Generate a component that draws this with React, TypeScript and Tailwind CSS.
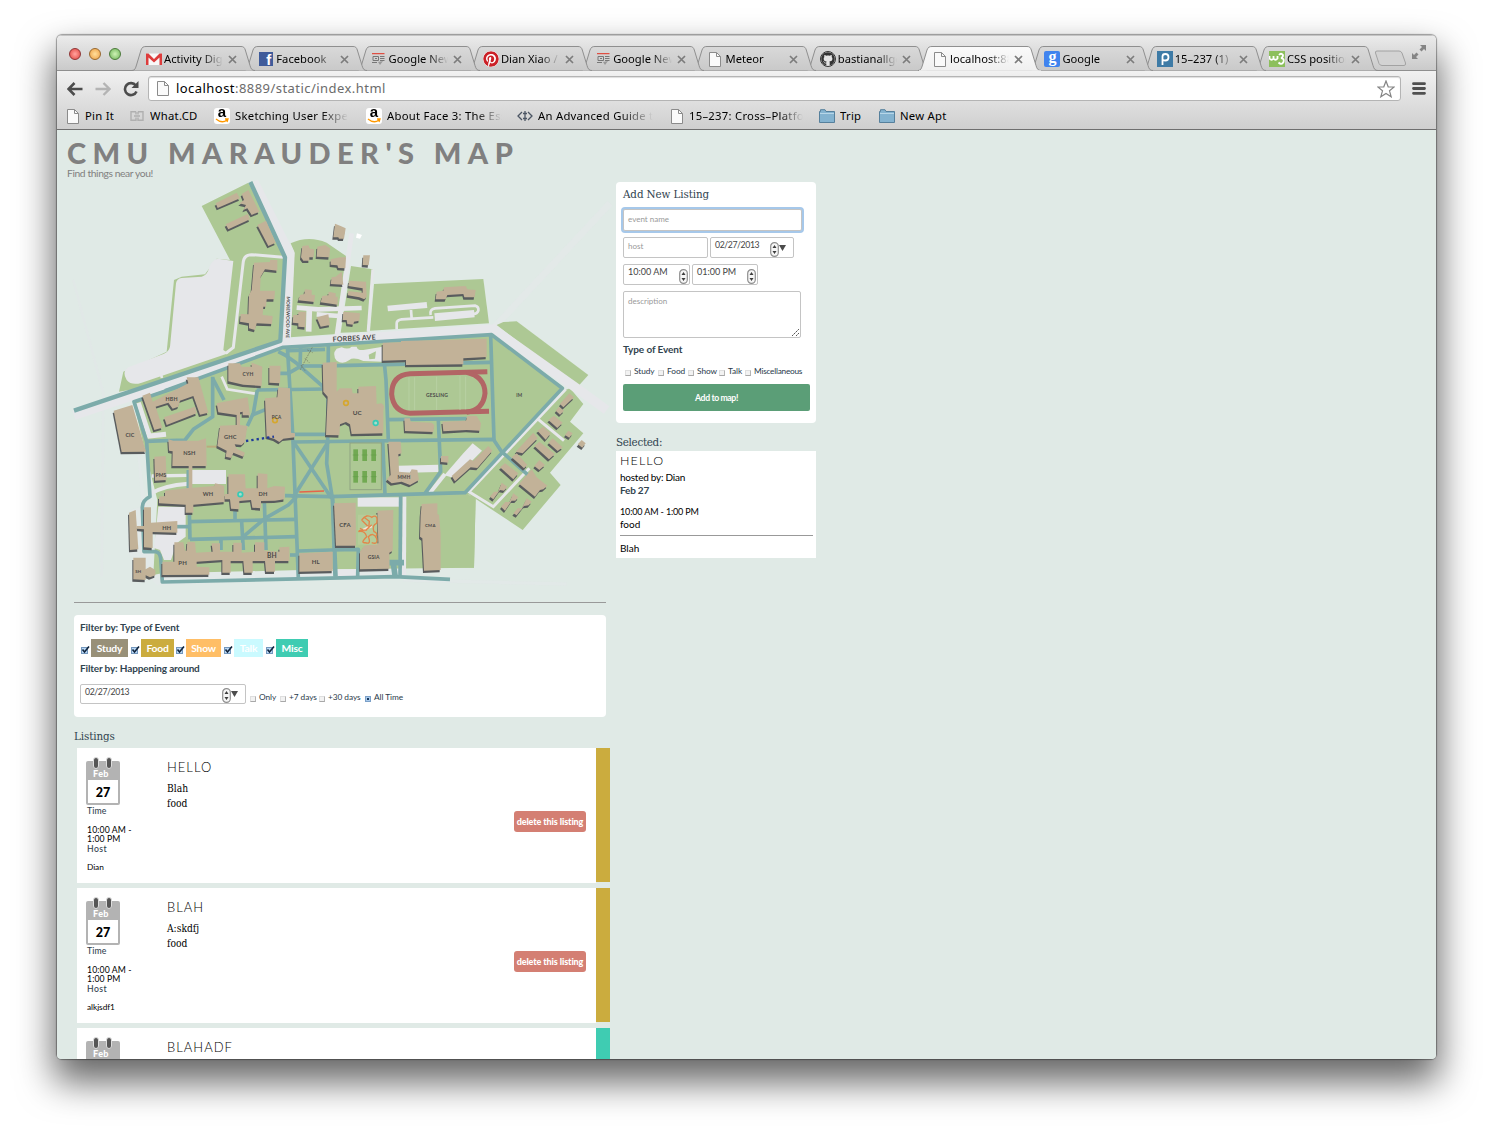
import React from "react";
import { FaGithub, FaPinterest } from "react-icons/fa";

const ui = "font-['Noto_Sans','Open_Sans',sans-serif]";
const slab = "font-['DejaVu_Serif_Condensed','DejaVu_Serif',serif]";

/* ---------- browser chrome ---------- */

function PageIcon() {
  return (
    <svg width="12" height="15" viewBox="0 0 12 15" className="shrink-0">
      <path d="M.5 .5H7.5L11.5 4.5V14.5H.5Z" fill="#fafafa" stroke="#8b8b8b" />
      <path d="M7.5 .5V4.5H11.5" fill="none" stroke="#8b8b8b" />
    </svg>
  );
}

function Favicon({ kind }: { kind: string }) {
  switch (kind) {
    case "gmail":
      return (
        <svg width="16" height="16" viewBox="0 0 16 16">
          <rect y="2.500" width="16" height="11.500" fill="#f8f8f8" />
          <path d="M0 2.500H2.500L8 8L13.500 2.500H16V14H13.500V6.500L8 11.500L2.500 6.500V14H0Z" fill="#dd3c3c" />
        </svg>
      );
    case "facebook":
      return (
        <span className="relative block h-[14px] w-[14px] overflow-hidden bg-[#3f5b9a] font-['Liberation_Sans',sans-serif] text-[15px] font-bold leading-[16px] text-white">
          <span className="absolute right-[2px] top-0">f</span>
        </span>
      );
    case "news":
      return (
        <svg width="13" height="12" viewBox="0 0 13 12">
          <path d="M0 .7H12.500" stroke="#df4f43" strokeWidth="1.300" />
          <path d="M1 3.500H6.500V7.500H1ZM3 5.500H5M0 9.500H5M8 3.500H12.500M8 5.500H12.500M8 7.500H12.500" fill="none" stroke="#777" />
          <path d="M6 9L11 8L8 12Z" fill="#999" />
        </svg>
      );
    case "pinterest":
      return <FaPinterest size={16} color="#cb2027" className="rounded-full bg-white" />;
    case "github":
      return (
        <span className="flex h-4 w-4 items-center justify-center rounded-full border border-[#333] bg-[#e4e4e4]">
          <FaGithub size={14} color="#333" />
        </span>
      );
    case "google":
      return (
        <span className="block h-4 w-4 rounded-[2px] bg-[#4083ee] text-center font-['Liberation_Serif',serif] text-[16px] font-bold leading-[12px] text-white">g</span>
      );
    case "piazza":
      return (
        <svg width="16" height="16" viewBox="0 0 16 16">
          <rect width="16" height="16" fill="#3e7ba6" />
          <path d="M5.500 14V5.500Q5.500 3 8.300 3Q11.500 3 11.500 6.200Q11.500 9.500 8.300 9.500Q7 9.500 6 9" fill="none" stroke="#fff" strokeWidth="1.800" />
        </svg>
      );
    case "w3":
      return (
        <svg width="16" height="16" viewBox="0 0 16 16">
          <rect width="16" height="16" fill="#8cbf5c" />
          <path d="M.5 5V7.500Q2.500 10 4.500 7.500V5V7.500Q6.500 10 8.500 7.500V5M10 4Q12 1.500 14 4Q14 6.500 12 7Q15.500 7.500 14.500 11Q12.500 14.500 9.500 11.500" fill="none" stroke="#fff" strokeWidth="1.800" />
        </svg>
      );
    default:
      return <PageIcon />;
  }
}

const tabs = [
  { kind: "gmail", label: "Activity Digest" },
  { kind: "facebook", label: "Facebook" },
  { kind: "news", label: "Google News" },
  { kind: "pinterest", label: "Dian Xiao / Pins" },
  { kind: "news", label: "Google News" },
  { kind: "page", label: "Meteor" },
  { kind: "github", label: "bastianallgeier" },
  { kind: "page", label: "localhost:8889", active: true },
  { kind: "google", label: "Google" },
  { kind: "piazza", label: "15–237 (1)" },
  { kind: "w3", label: "CSS positioning" },
];

function Tab({ kind, label, active, order }: { kind: string; label: string; active?: boolean; order: number }) {
  return (
    <div className="relative h-[25px] w-[112.3px] shrink-0" style={{ zIndex: active ? 40 : 20 - order }}>
      <svg className="absolute left-0 top-0 overflow-visible" width="124" height="25" viewBox="0 0 124 25">
        <path
          d="M0 24.500C3 24.500 3.500 22 4.500 19L9 4C10 1.200 11.500 .5 14 .5H109C111.500 .5 112.500 1.500 113.300 4L118 19.500C119 23 120 24.500 123 24.500"
          fill={active ? "url(#activeTab)" : "url(#idleTab)"}
          stroke="#8f8f8f"
        />
        {active && <path d="M1 25H123" stroke="#f0f0f0" strokeWidth="1.500" />}
      </svg>
      <div className="relative flex h-[25px] items-center pl-[14px] pt-px">
        <span className="flex w-[16px] shrink-0 justify-center"><Favicon kind={kind} /></span>
        <span className={`${ui} ml-[2px] w-[59px] shrink-0 overflow-hidden whitespace-nowrap text-[11.2px] text-black [mask-image:linear-gradient(to_right,black_66%,transparent_100%)]`}>
          {label}
        </span>
        <svg className="ml-[5px]" width="9" height="9" viewBox="0 0 9 9">
          <path d="M1 1L8 8M8 1L1 8" stroke="#7c7c7c" strokeWidth="1.700" />
        </svg>
      </div>
    </div>
  );
}

function Light({ tone }: { tone: string }) {
  return <span className={`block h-[12px] w-[12px] rounded-full border ${tone}`} />;
}

function Amazon() {
  return (
    <span className="flex h-4 w-4 shrink-0 flex-col items-center overflow-hidden rounded-[3px] bg-white">
      <span className="font-['Liberation_Sans',sans-serif] text-[15px] font-bold leading-[8px] text-black">a</span>
      <svg className="mt-[2px] shrink-0" width="14" height="5" viewBox="0 0 14 5"><path d="M1 1Q7 6 12 2M10 1L13 1L12 4" fill="none" stroke="#f90" strokeWidth="1.300" /></svg>
    </span>
  );
}

function Folder() {
  return (
    <svg width="16" height="14" viewBox="0 0 16 14" className="shrink-0">
      <path d="M.5 2.500V13.500H15.500V2.500H7L6 .7H1.500V2.500Z" fill="#84b3d0" stroke="#56809c" />
      <path d="M1 4.500H15" stroke="#b7d6e8" />
    </svg>
  );
}

function Bookmark({ icon, label, box }: { icon: React.ReactNode; label: string; box: string }) {
  return (
    <div className={`flex h-[26px] shrink-0 items-center ${box}`}>
      {icon}
      <span className={`${ui} overflow-hidden whitespace-nowrap text-[11.3px] tracking-[0.26px] text-black`}>{label}</span>
    </div>
  );
}

function Chrome() {
  return (
    <header className="h-[95px] shrink-0 overflow-hidden rounded-t-[5px]">
      <svg width="0" height="0" className="absolute">
        <defs>
          <linearGradient id="idleTab" x1="0" y1="0" x2="0" y2="1"><stop offset="0" stopColor="#d9d9d9" /><stop offset="1" stopColor="#c9c9c9" /></linearGradient>
          <linearGradient id="activeTab" x1="0" y1="0" x2="0" y2="1"><stop offset="0" stopColor="#fafafa" /><stop offset="1" stopColor="#f0f0f0" /></linearGradient>
        </defs>
      </svg>
      <div className="flex h-[36px] items-end border-b border-t border-b-[#8f8f8f] border-t-[#c4c4c4] bg-linear-to-b from-[#ebebeb] to-[#cacaca]">
        <div className="flex h-[34px] w-[75px] items-center gap-2 pl-[12px] pt-px">
          <Light tone="border-[#8f3535] bg-radial from-[#ff9a95] from-10% to-[#dd3c3d]" />
          <Light tone="border-[#98682e] bg-radial from-[#ffd992] from-10% to-[#eb9d3c]" />
          <Light tone="border-[#4b7a3a] bg-radial from-[#c5ecac] from-10% to-[#6bb356]" />
        </div>
        <div className="-mb-px flex">
          {tabs.map((t, i) => <Tab key={i} {...t} order={i} />)}
        </div>
        <svg className="mb-[3px] ml-[6px]" width="34" height="17" viewBox="0 0 34 17">
          <path d="M4 1H26Q28 1 29 3L32.500 13Q33 15.500 31 15.500H9Q7 15.500 6 13.500L2.500 3Q2 1 4 1Z" fill="#d3d3d3" stroke="#a2a2a2" />
        </svg>
        <svg className="mb-[10px] ml-auto mr-[9px]" width="16" height="16" viewBox="0 0 16 16">
          <path d="M9 1H15V7L13 5L10.500 7.500L8.500 5.500L11 3ZM7 15H1V9L3 11L5.500 8.500L7.500 10.500L5 13Z" fill="#858585" />
        </svg>
      </div>
      <div className="h-[59px] border-b border-[#6f6f6f] bg-linear-to-b from-[#f1f1f1] to-[#cfcfcf]">
        <div className="flex h-[33px] items-center pl-[10px] pt-[2px]">
          <svg width="16" height="14" viewBox="0 0 16 14"><path d="M15.500 7H2M7.500 1L1.500 7L7.500 13" fill="none" stroke="#4c4c4c" strokeWidth="2.600" /></svg>
          <svg className="ml-[12px]" width="16" height="14" viewBox="0 0 16 14"><path d="M.5 7H14M8.500 1L14.500 7L8.500 13" fill="none" stroke="#b4b4b4" strokeWidth="2.300" /></svg>
          <svg className="ml-[12px]" width="16" height="16" viewBox="0 0 16 16">
            <path d="M12.800 4.500A6 6 0 1 0 13.500 10.500" fill="none" stroke="#4c4c4c" strokeWidth="2.600" />
            <path d="M15.500 0V7H8.500Z" fill="#4c4c4c" />
          </svg>
          <div className="ml-[9px] flex h-[25px] w-[1253px] items-center rounded-[3px] border border-[#b4b4b4] bg-white pl-[8px] pr-[5px] shadow-[inset_0_1px_1px_#ddd]">
            <PageIcon />
            <span className="ml-[7px] font-['Noto_Sans','Open_Sans',sans-serif] text-[13px] tracking-[0.45px] text-[#6b6b6b]"><span className="text-black">localhost</span>:8889/static/index.html</span>
            <svg className="ml-auto" width="18" height="18" viewBox="0 0 18 18"><path d="M9 1L11.200 6.800L17.200 7L12.500 10.800L14.200 16.800L9 13.400L3.800 16.800L5.500 10.800L.8 7L6.800 6.800Z" fill="#fff" stroke="#858585" strokeWidth="1.200" /></svg>
          </div>
          <svg className="ml-[11px]" width="14" height="13" viewBox="0 0 14 13"><path d="M1.500 1.700H12.500M1.500 6.500H12.500M1.500 11.300H12.500" stroke="#505050" strokeWidth="2.800" strokeLinecap="round" /></svg>
        </div>
        <div className="flex h-[24px] items-center pl-[10px]">
          <Bookmark icon={<PageIcon />} label="Pin It" box="w-[63px] gap-[6px]" />
          <Bookmark
            icon={<svg width="14" height="10" viewBox="0 0 14 10" className="shrink-0"><path d="M6 .8H1V9.200H6V6.500M6 3.500V.8M8 .8H13V9.200H8V6.500M8 3.500V.8M4 5H10" fill="none" stroke="#b0b0b0" strokeWidth="1.400" /></svg>}
            label="What.CD" box="w-[84px] gap-[6px]" />
          <Bookmark icon={<Amazon />} label="Sketching User Experiences" box="w-[134px] gap-[5px] [mask-image:linear-gradient(to_right,black_80%,transparent_100%)]" />
          <Bookmark icon={<Amazon />} label="About Face 3: The Essentials" box="ml-[18px] w-[136px] gap-[5px] [mask-image:linear-gradient(to_right,black_80%,transparent_100%)]" />
          <Bookmark
            icon={<svg width="16" height="10" viewBox="0 0 16 10" className="shrink-0"><path d="M5 1L1 5L5 9M11 1L15 5L11 9M8 0V10M6 2.500H10M6 7.500H10" fill="none" stroke="#4b5563" strokeWidth="1.300" /></svg>}
            label="An Advanced Guide to HTML" box="ml-[15px] w-[136px] gap-[5px] [mask-image:linear-gradient(to_right,black_76%,transparent_100%)]" />
          <Bookmark icon={<PageIcon />} label="15–237: Cross–Platform" box="ml-[18px] w-[132px] gap-[6px] [mask-image:linear-gradient(to_right,black_82%,transparent_100%)]" />
          <Bookmark icon={<Folder />} label="Trip" box="ml-[16px] w-[60px] gap-[5px]" />
          <Bookmark icon={<Folder />} label="New Apt" box="gap-[5px]" />
        </div>
      </div>
    </header>
  );
}

/* ---------- campus map ---------- */

const lawns = [
  "395,78 535,8 650,232 637,482 190,628 147,635 160,575 290,515 312,300 335,290 405,283 440,236 480,240",
  "843,258 908,268 892,455 812,458",
  "912,312 1240,297 1257,430 900,452",
  "1280,435 1300,426 1340,424 1555,585 1522,622",
  "190,662 640,500 1265,462 1480,622 1195,945 1217,955 1212,1163 780,1168 275,1180 250,1185 262,960 222,800",
  "1010,955 1217,945 1212,1163 1008,1160",
  "1480,632 1500,625 1540,672 1500,725 1540,760 1440,878 1472,915 1358,1050 1195,942",
];

const buildings = [
  "437,70 500,38 510,55 443,84",
  "515,42 535,30 568,95 545,105 532,85 520,90 528,75 508,70 522,60",
  "467,133 533,102 540,118 475,148",
  "562,135 588,122 617,188 595,198",
  "552,248 600,246 600,240 622,240 622,272 585,268 572,290 570,332 615,332 613,358 590,358 588,380 580,380 578,405 608,408 606,432 560,430 555,450 537,445 537,430 510,425 512,402 535,403 537,345 545,330",
  "697,198 715,196 720,206 733,208 731,232 718,232 718,242 700,242 693,232",
  "742,200 765,195 780,205 778,232 740,230",
  "782,238 810,232 828,232 826,265 805,264 802,256 782,254",
  "797,290 815,275 820,314 782,312 785,292",
  "690,345 703,342 705,328 725,330 725,344 735,345 733,366 685,361",
  "757,348 775,346 776,335 797,340 797,350 803,350 803,374 752,367",
  "685,395 708,395 706,442 685,440 685,430 668,428 670,405 685,405",
  "740,412 775,403 780,435 752,440",
  "795,131 812,138 827,145 822,176 807,176 805,172 790,172",
  "880,226 900,226 896,256 878,255",
  "837,302 888,305 890,350 883,358 868,352 833,346 835,333 878,338 878,325 835,318",
  "820,395 870,400 868,422 852,425 850,434 832,432 830,420 818,420",
  "1122,322 1187,318 1192,328 1217,330 1214,352 1183,352 1180,342 1132,345 1127,358 1097,358 1100,335 1120,332",
  "938,488 993,487 993,483 1250,476 1250,531 1180,535 1180,553 1008,555 1008,540 938,542",
  "758,548 800,546 800,635 810,625 845,625 848,640 865,640 865,620 918,618 920,672 935,670 942,678 940,692 940,760 845,762 840,733 828,726 810,733 808,766 768,765 773,650 760,635",
  "131,692 187,675 228,815 155,816",
  "217,647 240,638 248,665 355,610 350,592 385,592 415,698 390,704 370,648 330,662 325,680 308,686 295,668 257,680 277,743 253,750",
  "282,712 375,680 380,700 290,735",
  "295,778 310,782 385,782 408,775 410,858 307,858 308,814 297,812",
  "253,830 287,828 290,900 255,902",
  "440,670 533,652 540,706 518,706 518,695 510,697 510,735 532,738 525,785 515,795 494,793 500,806 525,818 520,830 490,818 484,834 467,830 470,812 442,798 450,737 500,735 500,705 445,697",
  "475,550 510,550 515,560 545,560 545,548 577,560 575,618 520,614 475,604",
  "598,557 632,557 630,610 598,608",
  "585,655 622,652 625,622 660,625 663,758 675,760 675,772 640,776 628,786 612,776 590,770",
  "267,950 285,948 285,932 350,925 433,918 435,910 445,912 462,918 464,966 370,974 370,998 347,998 347,974 267,970",
  "475,883 525,883 527,925 563,925 563,880 592,882 592,925 613,918 645,920 643,958 615,962 573,963 573,985 547,983 543,960 508,963 508,988 483,986 480,958 464,958 464,942 475,942",
  "222,982 243,982 243,1028 322,1023 322,1058 248,1056 248,1104 222,1102 222,1048 200,1046 200,1038 222,1038",
  "177,998 197,990 205,1108 180,1110",
  "190,1133 227,1133 227,1168 240,1160 256,1170 256,1186 240,1192 227,1186 227,1200 190,1198",
  "277,1145 313,1145 313,1087 340,1087 345,1112 350,1112 352,1085 375,1087 378,1118 428,1115 425,1090 450,1090 450,1115 490,1115 490,1088 515,1088 515,1118 555,1115 555,1087 583,1087 583,1112 628,1115 628,1102 658,1100 658,1143 615,1143 615,1175 588,1175 585,1143 548,1143 548,1178 523,1178 520,1143 482,1143 482,1178 457,1178 457,1140 380,1145 380,1160 418,1162 418,1184 277,1185",
  "688,1120 788,1115 788,1173 688,1175",
  "1003,715 1020,715 1022,725 1085,728 1093,735 1090,756 1005,753",
  "1117,725 1188,722 1192,708 1220,708 1233,730 1230,752 1190,750 1120,754",
  "955,785 992,785 995,820 985,823 987,875 1020,878 1025,868 1042,870 1047,900 1020,915 995,905 965,910 950,898 962,885",
  "1113,828 1135,828 1135,848 1113,846",
  "1145,888 1200,838 1210,843 1255,798 1267,812 1222,864 1202,862 1155,904",
  "792,970 857,968 858,1097 798,1097",
  "870,1115 883,1097 925,1090 922,992 970,990 968,1112 958,1118 958,1166 870,1168",
  "1055,972 1102,970 1102,1002 1107,1005 1112,1060 1112,1170 1062,1172 1057,1075 1050,1070 1052,1005",
  "1470,672 1498,640 1512,652 1480,682",
  "1457,692 1467,680 1482,692 1470,704",
  "1435,720 1452,707 1478,728 1462,744",
  "1485,765 1495,752 1508,760 1498,773",
  "1523,793 1535,780 1547,790 1537,803",
  "1402,752 1420,740 1442,760 1427,779",
  "1435,788 1448,775 1478,802 1463,813",
  "1393,798 1408,785 1455,822 1437,838",
  "1337,815 1390,758 1403,775 1358,820",
  "1325,832 1340,820 1372,855 1362,865",
  "1393,858 1408,840 1425,855 1408,870",
  "1290,862 1305,850 1345,880 1330,898",
  "1348,912 1385,868 1400,892 1432,917 1420,928 1410,930 1395,950",
  "1260,950 1272,935 1284,935 1295,908 1312,920 1302,932 1290,930 1270,958",
  "1293,980 1306,966 1318,966 1330,940 1345,952 1336,962 1325,962 1305,992",
  "1330,1000 1343,985 1356,984 1370,955 1385,965 1376,976 1362,978 1340,1006",
];

const paths = [
  "M285,632L640,502L810,492L1265,464L1477,625L1185,938L780,950L645,947",
  "M652,500L668,760L685,1195",
  "M775,497L773,785L770,850L788,960L798,1190",
  "M560,630L770,627",
  "M668,763H770",
  "M668,786L1270,778L1295,815L1382,892",
  "M670,785L785,955",
  "M775,785L668,955",
  "M355,610L192,665L230,785L240,950Q215,962 217,985L222,1115H258Q270,1118 272,1135L277,1206L975,1190L1140,1198",
  "M228,784L345,780L370,748L428,710V590",
  "M428,595L462,660",
  "M562,630L550,700L532,738",
  "M545,706L588,688",
  "M800,557L1262,547",
  "M943,550L948,600L955,780",
  "M1262,465L1272,780",
  "M955,719L1190,716",
  "M1105,720L1112,875L1065,940",
  "M938,780L945,945",
  "M992,945L990,1190",
  "M780,1110L865,1108L863,1190",
  "M787,950L795,1190",
  "M355,870V925",
  "M358,990L360,1078",
  "M355,1025L680,1018",
  "M360,1078L680,1070",
  "M515,1025L520,1110",
  "M583,965L588,1110",
  "M520,1070L585,1015L655,975L680,950",
  "M495,985V1020",
  "M320,1040H355",
  "M453,1080V1110",
  "M660,1125H685",
  "M685,1113L780,1110",
  "M625,515L645,525L680,550L765,625",
  "M692,500L690,560L655,580H630",
  "M655,512L765,508",
  "M690,558H760",
];

const whiteRoads: [string, number][] = [
  ["M640,232L545,224Q524,224 520,244L490,502L467,520", 9],
  ["M272,580L276,594", 8],
  ["M845,160L800,470", 14],
  ["M680,383L745,388L875,384", 14],
  ["M718,385L716,455", 17],
  ["M740,403L808,408", 14],
  ["M908,268L894,455", 8],
  ["M1023,390L1025,415", 8],
  ["M980,448V430Q980,420 995,418L1090,412", 8],
  ["M1082,405Q1078,388 1095,385L1215,377Q1227,380 1225,392Q1222,402 1210,402", 8],
  ["M205,668L238,768L288,763", 15],
  ["M245,888L350,886", 10],
  ["M240,942Q280,916 355,911", 12],
  ["M985,868L1105,865", 22],
  ["M1003,950L1002,1190", 12],
  ["M1080,938L1125,882", 12],
  ["M455,590L472,628L555,641", 8],
  ["M1487,628L1197,935L1270,980L1378,865", 9],
  ["M1402,716L1482,782", 9],
];

const labels: [string, number, number, number][] = [
  ["CYH", 534, 588, 15], ["HBH", 305, 662, 16], ["CIC", 180, 771, 16], ["NSH", 358, 824, 17], ["PMS", 273, 890, 15],
  ["GHC", 481, 777, 17], ["PCA", 620, 716, 14], ["UC", 862, 705, 19], ["WH", 414, 947, 17], ["DH", 579, 949, 17],
  ["HH", 290, 1049, 17], ["SH", 205, 1178, 13], ["PH", 338, 1156, 18], ["BH", 606, 1134, 20], ["HL", 737, 1151, 18],
  ["CFA", 825, 1040, 18], ["GSIA", 911, 1136, 15], ["CMA", 1081, 1042, 13], ["MMH", 1002, 898, 14], ["GESLING", 1101, 652, 15],
  ["IM", 1348, 650, 14],
];

function CampusMap() {
  return (
    <svg width="532" height="410" viewBox="12 6 1596 1230" className="block overflow-visible">
      <g fill="none" stroke="#e4e7e9" strokeLinecap="butt">
        <path d="M10,300L100,640L95,1190" strokeWidth="8" opacity=".4" />
        <path d="M1275,440L1620,70" strokeWidth="20" opacity=".6" />
        <path d="M1000,1200L1490,1212" strokeWidth="10" opacity=".5" />
      </g>
      <g fill="#e6e7ea">
        <path d="M190,675L215,980L180,990L175,1120L260,1215L1010,1190L1000,1150H250Z" opacity=".35" />
      </g>
      <g fill="#adc894">
        {lawns.map((p, i) => <polygon key={i} points={p} />)}
        <path d="M662,190Q715,165 770,188L828,228L800,462L660,472L673,215Z" />
      </g>
      <path d="M490,243L460,510L475,520L215,608Q185,618 170,600Q155,575 175,562L280,522Q297,514 300,500L318,310Q320,296 335,294L395,290Q412,286 418,262Q428,236 445,236Z" fill="#e6e7ea" />
      <g fill="none" stroke="#e6e7ea">
        <path d="M552,4L661,222L649,488" strokeWidth="26" />
        <path d="M12,706L180,650L645,490L1270,447L1530,632L1610,690" strokeWidth="28" />
        {whiteRoads.map(([d, w], i) => <path key={i} d={d} strokeWidth={w} />)}
      </g>
      <g fill="#e6e7ea">
        <polygon points="952,377 1070,366 1072,384 954,394" />
        <polygon points="1093,400 1212,390 1214,412 1095,423" />
        <rect x="365" y="870" width="103" height="42" />
        <polygon points="265,980 347,980 347,1070 320,1090 303,1140 282,1140 270,1110 252,1104" />
        <polygon points="1208,790 1236,812 1155,895 1123,886 1180,820" />
        <rect x="863" y="952" width="125" height="28" />
        <rect x="802" y="1168" width="56" height="20" />
        <path d="M815,502Q835,510 845,500H860Q862,512 880,510L938,500V545L880,543Q850,530 838,540Q818,555 800,542Q785,522 800,506Z" />
      </g>
      <path d="M896,524L918,514L915,536L898,538Z" fill="#adc894" />
      <g fill="none" stroke="#7cabaa" strokeWidth="11" strokeLinejoin="round">
        {paths.map((d, i) => <path key={i} d={d} />)}
        <path d="M541,6L645,232L631,483L12,692" strokeWidth="13" />
        <path d="M958,1148H1002M970,1150L976,1193" strokeWidth="17" />
      </g>
      <g fill="none">
        <path d="M1252,575L1020,581Q965,585 965,643Q970,695 1020,700L1257,694" stroke="#b26565" strokeWidth="15" />
        <path d="M1190,577Q1245,590 1245,640Q1240,690 1190,697" stroke="#b26565" strokeWidth="15" />
        <path d="M1017,592V690M1034,592V690M1100,590V690M1170,588V690M1187,590V688" stroke="#bcd5aa" strokeWidth="2" />
        <rect x="840" y="789" width="94" height="140" stroke="#8fa482" strokeWidth="3" />
      </g>
      <g fill="#71a952">
        {[850, 877, 904].map((x) => [808, 873].map((y) => (
          <g key={x + y}>
            <rect x={x} y={y} width="14" height="35" />
            <path d={`M${x - 2},${y + 17}h18`} stroke="#5d9a45" strokeWidth="1.500" />
          </g>
        )))}
      </g>
      <path d="M410,800H442" stroke="#b9ab7e" strokeWidth="6" />
      <g fill="#595c5e" transform="translate(-3 7)">
        {buildings.map((p, i) => <polygon key={i} points={p} />)}
      </g>
      <g fill="#c2b298">
        {buildings.map((p, i) => <polygon key={i} points={p} />)}
        <rect x="356" y="858" width="11" height="70" />
      </g>
      <rect x="864" y="1004" width="58" height="90" fill="#b5cc9a" />
      <g fill="none" stroke="#e2864a" strokeWidth="4">
        <path d="M875,1020Q890,1000 905,1012Q925,1000 920,1030Q905,1035 912,1055Q925,1060 918,1070M870,1045Q890,1060 895,1040Q880,1025 875,1020M865,1055Q885,1050 890,1070Q870,1090 885,1088Q905,1095 895,1070Q910,1055 920,1075Q925,1095 905,1088" />
        <path d="M880,1050L905,1038" stroke="#f5e3d6" strokeWidth="8" />
        <path d="M866,1052L888,1050L905,1034M882,1012L898,1024L896,1046" />
        <path d="M688,936L762,933" stroke="#e5644a" strokeWidth="5" />
      </g>
      <path d="M690,570L728,500M693,555L705,572M705,535L718,548M712,510L728,518" stroke="#6b6e5c" strokeWidth="2" fill="none" strokeDasharray="5 3" />
      <path d="M528,783L612,770" stroke="#1f3a9a" strokeWidth="7" strokeDasharray="7 9" />
      <path d="M861,160L876,165L870,176L858,173Z" fill="#fff" />
      <g fill="none" strokeWidth="5">
        <circle cx="615" cy="721" r="7" stroke="#d5a72f" />
        <circle cx="828" cy="669" r="7" stroke="#d5a72f" />
        <circle cx="511" cy="943" r="7" stroke="#36cbb6" fill="#a7dccb" />
        <circle cx="917" cy="729" r="7" stroke="#36cbb6" fill="#a7dccb" />
      </g>
      <g fill="#4a4a48" fontFamily="Lato, sans-serif" fontWeight="700" textAnchor="middle" letterSpacing=".5">
        {labels.map(([t, x, y, s]) => <text key={t} x={x} y={y} fontSize={s}>{t}</text>)}
        <text fontSize="21" transform="translate(853 482) rotate(-3)">FORBES AVE</text>
        <text fontSize="14" transform="translate(649 412) rotate(91)">MOREWOOD AVE</text>
      </g>
    </svg>
  );
}

/* ---------- form pieces ---------- */

function Spinner() {
  return (
    <svg width="9" height="15" viewBox="0 0 9 15" className="shrink-0">
      <rect x=".7" y=".7" width="7.600" height="13.600" rx="3.600" fill="#f6f6f6" stroke="#8f8f8f" strokeWidth="1.200" />
      <path d="M4.500 3L6.500 6H2.500ZM4.500 12L6.500 9H2.500Z" fill="#3d3d3d" />
    </svg>
  );
}

function Caret() {
  return <svg width="7" height="6" viewBox="0 0 7 6" className="mb-[3px]"><path d="M0 0H7L3.500 6Z" fill="#4c4c4c" /></svg>;
}

function Field({ box, value, hint, spin, caret }: { box: string; value: string; hint?: boolean; spin?: boolean; caret?: boolean }) {
  const type = hint
    ? "text-[8px] text-[#999]"
    : caret
      ? "text-[8.7px] tracking-[-0.4px] text-[#444]"
      : "text-[9px] text-[#444]";
  return (
    <div className={`flex rounded-[2px] border border-[#c4c4c4] bg-white ${box}`}>
      <span className={`whitespace-nowrap pl-[4px] pt-px leading-[12px] ${type}`}>{value}</span>
      {spin && <span className="ml-auto mt-[3px] flex items-center"><Spinner />{caret && <Caret />}</span>}
    </div>
  );
}

function Option({ label, box, on }: { label: string; box: string; on?: boolean }) {
  return (
    <span className={`flex items-center gap-[3px] whitespace-nowrap text-[8.3px] tracking-[-0.05px] text-[#2a3a4a] ${box}`}>
      <span className={`mt-[2px] h-[6px] w-[6px] shrink-0 border ${on ? "border-[#7ba0c8] bg-[#17375e] shadow-[inset_0_0_0_1px_#a9c9ea]" : "border-[#dedede] border-b-[#a8a8a8] border-r-[#b4b4b4] bg-[#f2f2f2]"}`} />
      {label}
    </span>
  );
}

function AddListing() {
  return (
    <section className="h-[241px] w-[200px] rounded-[4px] bg-white pl-[7px]">
      <h2 className={`${slab} pt-[5px] text-[11.5px] leading-[15px] tracking-[-0.1px] text-[#31444f]`}>Add New Listing</h2>
      <Field box="mt-[7px] h-[22px] w-[179px] pt-[2px] border-[#a9a9a9] shadow-[0_0_0_2px_#a6c8ea]" value="event name" hint />
      <div className="mt-[6px] flex gap-[2px]">
        <Field box="h-[21px] w-[85px] pt-px" value="host" hint />
        <Field box="h-[21px] w-[84px] pr-[7px]" value="02/27/2013" spin caret />
      </div>
      <div className="mt-[6px] flex gap-[2px]">
        <Field box="h-[21px] w-[67px] pr-[1px]" value="10:00 AM" spin />
        <Field box="h-[21px] w-[66px] pr-[1px]" value="01:00 PM" spin />
      </div>
      <div className="mt-[6px] flex h-[47px] w-[178px] items-end justify-between rounded-[2px] border border-[#c4c4c4]">
        <span className="self-start pl-[4px] pt-[3px] text-[8px] leading-[12px] text-[#999]">description</span>
        <svg width="9" height="9" viewBox="0 0 9 9"><path d="M1 8L8 1M5 8L8 5" stroke="#555" strokeDasharray="2 .6" /></svg>
      </div>
      <h3 className="mt-[4px] text-[10px] font-bold leading-[14px] tracking-[-0.1px] text-[#31444f]">Type of Event</h3>
      <div className="mt-[9px] flex h-[13px] items-center pl-[2px]">
        <Option label="Study" box="w-[33px]" />
        <Option label="Food" box="w-[30px]" />
        <Option label="Show" box="w-[31px]" />
        <Option label="Talk" box="w-[26px]" />
        <Option label="Miscellaneous" box="w-[60px] tracking-[-0.25px]" />
      </div>
      <button className="mt-[6px] block h-[27px] w-[187px] rounded-[2px] bg-[#5b9e77] text-[8.7px] font-bold leading-[25px] tracking-[-0.4px] text-white">Add to map!</button>
    </section>
  );
}

function Selected() {
  return (
    <section className="mt-[11px] w-[200px]">
      <h2 className={`${slab} text-[11.5px] leading-[16px] tracking-[-0.3px] text-[#31444f]`}>Selected:</h2>
      <div className="mt-px h-[107px] bg-white px-[4px] pt-[2px] text-[10px] text-black">
        <h3 className="text-[12.5px] font-light leading-[15px] tracking-[1.1px]">HELLO</h3>
        <p className="mt-[3px] leading-[12px] tracking-[-0.25px]">hosted by: Dian</p>
        <p className="font-bold leading-[14px] tracking-[-0.2px] text-[#31444f]">Feb 27</p>
        <p className="mt-[9px] text-[9px] leading-[12px] tracking-[-0.15px]">10:00 AM - 1:00 PM</p>
        <p className="leading-[12px]">food</p>
        <hr className="-mr-px mt-[5px] border-t-[1.500px] border-[#999]" />
        <p className="mt-[6px] leading-[13px]">Blah</p>
      </div>
    </section>
  );
}

const kinds = [
  { label: "Study", tone: "w-[37px] bg-[#989078]", gap: "ml-0" },
  { label: "Food", tone: "w-[33px] bg-[#cbac3e]", gap: "ml-[3px]" },
  { label: "Show", tone: "w-[35px] bg-[#ffbe66]", gap: "ml-[2px]" },
  { label: "Talk", tone: "w-[29px] bg-[#cafaff]", gap: "ml-[3px]" },
  { label: "Misc", tone: "w-[32px] bg-[#3fccb2]", gap: "ml-[3px]" },
];

function Filters() {
  return (
    <section className="mt-[12px] h-[102px] rounded-[4px] bg-white px-[6px] text-[#31444f]">
      <h3 className="pt-[5px] text-[10px] font-bold leading-[14px] tracking-[-0.1px]">Filter by: Type of Event</h3>
      <div className="mt-[5px] flex items-center pl-[1px]">
        {kinds.map((k) => (
          <span key={k.label} className={`flex items-center ${k.gap}`}>
            <svg width="10" height="10" viewBox="0 0 10 10" className="-ml-px mr-px mt-[4px]">
              <rect x="1.500" y="2.500" width="6" height="6" fill="#b9d7f5" stroke="#7397bd" />
              <path d="M2.500 4.500L4.500 7L9 1.500" fill="none" stroke="#10243c" strokeWidth="1.600" />
            </svg>
            <span className={`block h-[18px] text-center text-[10.3px] font-bold leading-[18px] tracking-[-0.2px] text-white ${k.tone}`}>{k.label}</span>
          </span>
        ))}
      </div>
      <h3 className="mt-[4px] text-[10px] font-bold leading-[14px] tracking-[-0.15px]">Filter by: Happening around</h3>
      <div className="mt-[9px] flex">
        <Field box="h-[20px] w-[166px] pr-[7px]" value="02/27/2013" spin caret />
        <div className="mt-[7px] flex h-[13px] items-center pl-[4px]">
          <Option label="Only" box="w-[30px]" />
          <Option label="+7 days" box="w-[39px]" />
          <Option label="+30 days" box="w-[46px]" />
          <Option label="All Time" box="w-[50px]" on />
        </div>
      </div>
    </section>
  );
}

function CalendarBadge() {
  return (
    <div className="relative h-[48px] w-[34px]">
      <div className="absolute inset-x-0 bottom-0 top-[4px] flex flex-col rounded-[2px] bg-[#b3b3b3] px-[2px] pb-[2px] text-center">
        <span className="h-[19px] pr-1 pt-[7px] text-[9px] font-black leading-[11px] tracking-[0.4px] text-white">Feb</span>
        <span className="h-[23px] bg-white text-[12.5px] font-black leading-[25px] text-black">27</span>
      </div>
      <span className="absolute left-[7px] top-0 h-[12px] w-[6px] rounded-full border border-[#ddd] bg-[#555]" />
      <span className="absolute left-[20px] top-0 h-[12px] w-[6px] rounded-full border border-[#ddd] bg-[#555]" />
    </div>
  );
}

function Listing({ title, text, kind, host, tone }: { title: string; text: string; kind: string; host: string; tone: string }) {
  return (
    <article className="flex h-[140px] w-[533px] shrink-0">
      <div className="flex h-[135px] w-[519px] bg-white pl-[9px] pt-[9px]">
        <div className="w-[81px] text-[8.7px] leading-[9px] tracking-[0.1px] text-black">
          <CalendarBadge />
          <p className="mt-px pl-[1px] font-medium text-[#31444f]">Time</p>
          <p className="mt-[10px] pl-[1px]">10:00 AM -<br />1:00 PM</p>
          <p className="mt-px pl-[1px] font-medium tracking-[0.4px] text-[#31444f]">Host</p>
          <p className="mt-[10px] pl-[1px] text-[8.3px] tracking-[-0.05px]">{host}</p>
        </div>
        <div>
          <h3 className="mt-[2px] text-[13px] font-light leading-[16px] tracking-[1px] text-black">{title}</h3>
          <p className={`${slab} mt-[6px] text-[10.2px] leading-[15px] text-black`}>{text}<br />{kind}</p>
        </div>
        <button className="ml-auto mr-[10px] mt-[54px] h-[21px] w-[72px] rounded-[3px] bg-[#d47f73] text-[9px] font-black leading-[21px] tracking-[-0.1px] text-white">delete this listing</button>
      </div>
      <div className={`h-[134px] w-[14px] ${tone}`} />
    </article>
  );
}

export default function App() {
  return (
    <div className="h-[1138px] w-[1493px] overflow-hidden bg-white pl-[57px] pt-[35px] font-['Lato',sans-serif]">
      <div className="flex h-[1024px] w-[1379px] flex-col rounded-[5px] shadow-[0_0_1px_1px_rgba(0,0,0,0.35),0_20px_36px_3px_rgba(0,0,0,0.6)]">
        <Chrome />
        <main className="min-h-0 flex-1 overflow-hidden rounded-b-[4px] bg-[#e0eae6] pl-[10px]">
          <div className="h-[52px] pt-[8px] text-[#808080]">
            <h1 className="whitespace-nowrap text-[29px] font-black leading-[30px] tracking-[6.45px]">CMU MARAUDER'S MAP</h1>
            <p className="text-[10.3px] leading-[11px] tracking-[-0.4px]">Find things near you!</p>
          </div>
          <div className="flex gap-[10px] pl-[7px]">
            <div className="w-[532px]">
              <CampusMap />
              <hr className="mt-[10px] border-t border-[#999]" />
              <Filters />
              <h2 className={`${slab} mt-[11px] text-[11.5px] leading-[16px] tracking-[-0.1px] text-[#31444f]`}>Listings</h2>
              <div className="mt-[4px] flex flex-col pl-[3px]">
                <Listing title="HELLO" text="Blah" kind="food" host="Dian" tone="bg-[#cbac3e]" />
                <Listing title="BLAH" text="A:skdfj" kind="food" host="alkjsdf1" tone="bg-[#cbac3e]" />
                <Listing title="BLAHADF" text="asdf" kind="misc" host="Dian" tone="bg-[#3fccb2]" />
              </div>
            </div>
            <div>
              <AddListing />
              <Selected />
            </div>
          </div>
        </main>
      </div>
    </div>
  );
}
